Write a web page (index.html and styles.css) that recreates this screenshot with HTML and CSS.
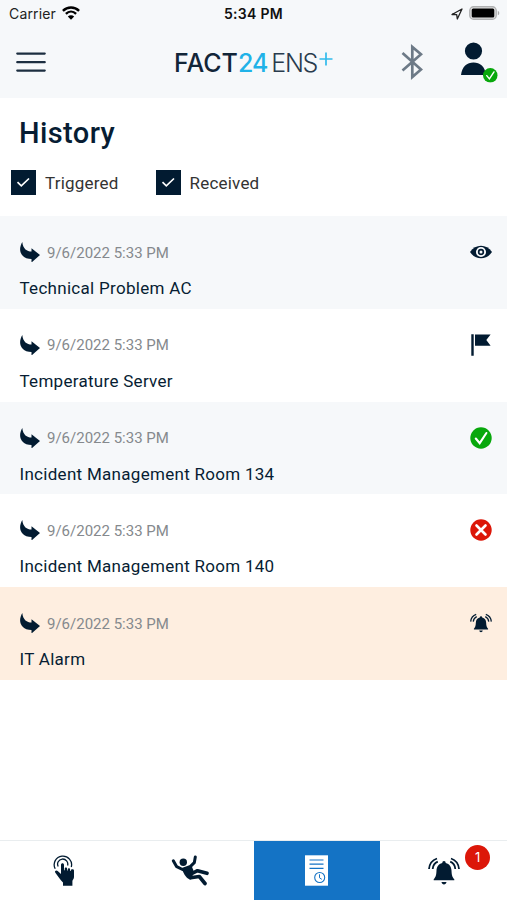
FILE: index.html
```html
<!DOCTYPE html>
<html lang="en">
<head>
<meta charset="utf-8">
<title>History</title>
<link rel="stylesheet" href="styles.css">
</head>
<body>
<svg width="0" height="0" class="defs" aria-hidden="true">
  <symbol id="arrow" viewBox="0 0 20 20"><path d="M2.300 0C-.3 4.500-.8 9.500 2 13C4.500 16 8 17 11.500 17V20.500L20 13L11.500 6.300V9.500C7 9.500 3 7 2.300 0Z"/></symbol>
  <symbol id="bell" viewBox="0 0 32 28">
    <path d="M16 4c1.100 0 1.700.8 1.700 2 3.800.9 5.600 3.800 5.800 7.500.2 4.500.7 6.500 2.800 8.800v1H5.700v-1c2.100-2.300 2.600-4.300 2.800-8.800.2-3.700 2-6.600 5.800-7.500 0-1.200.6-2 1.700-2ZM13.500 25h5c-.3 3.200-4.700 3.200-5 0Z"/>
    <path d="M1 12C1.500 6.500 4.500 3 9 1.500M4.700 12C5 8.700 6.800 6 9.800 4.700M31 12C30.500 6.500 27.500 3 23 1.500M27.300 12C27 8.700 25.200 6 22.200 4.700" fill="none" stroke="currentColor" stroke-width="1.800"/>
  </symbol>
  <symbol id="ok" viewBox="0 0 22 22"><circle cx="11" cy="11" r="10.700" fill="#08a80c"/><path d="M5.800 11.500l3.900 4.700L16.400 6" fill="none" stroke="#fff" stroke-width="2.100" stroke-linecap="round"/></symbol>
</svg>
<div class="app">
  <header class="top">
    <div class="status">
      <div class="status-left"><span class="carrier">Carrier</span>
        <svg class="wifi" viewBox="0 0 18 14"><path d="M.9 4.800C5.500.3 12.500.3 17.100 4.800M3.900 7.800c3-2.900 7.200-2.900 10.200 0" fill="none" stroke="#000" stroke-width="2.400"/><path d="M9 13.700L5.800 10.500c1.800-1.700 4.600-1.700 6.400 0Z"/></svg></div>
      <span class="time">5:34 PM</span>
      <div class="status-right">
        <svg class="loc" viewBox="0 0 12 12"><path d="M1 6.500L11 1L6.300 11L5.700 6.700Z" fill="none" stroke="#222" stroke-width="1.300" stroke-linejoin="round"/></svg>
        <svg class="battery" viewBox="0 0 31 14"><rect x=".8" y=".8" width="26.400" height="12.400" rx="3.800" fill="#e4e4e4" stroke="#b0b1b2" stroke-width="1.400"/><rect x="2.700" y="2.500" width="22.600" height="9" rx="1.500"/><path d="M28.800 4.700c2 .9 2 3.700 0 4.600Z" fill="#aaa"/></svg>
      </div>
    </div>
    <div class="bar">
      <svg class="menu" viewBox="0 0 30 21"><path d="M1.300 1.600h27.400M1.300 10.200h27.400M1.300 18.600h27.400" stroke="#1c2e40" stroke-width="2.300" stroke-linecap="round"/></svg>
      <div class="logo"><span class="fact">FACT</span><span class="num">24</span><span class="ens">ENS</span><svg class="plus" viewBox="0 0 14 14"><path d="M7 .5v13M.5 7h13" stroke="#31bbec" stroke-width="1.700"/></svg></div>
      <div class="actions">
        <svg class="bluetooth" viewBox="0 0 22 36"><path d="M1.500 9L20 25.500L11.300 33V3L20 10.300L1.500 26.500" fill="none" stroke="#6d7a87" stroke-width="2.700"/></svg>
        <svg class="user" viewBox="0 0 38 42"><circle cx="13.500" cy="10" r="8.600"/><path d="M1 34C2 25.500 7 21.500 13.500 21.500S25 25.500 26 34Z"/><use href="#ok" x="22.800" y="26.800" width="15" height="15"/></svg>
      </div>
    </div>
  </header>
  <main>
    <section class="intro">
      <h1>History</h1>
      <div class="filters">
        <label class="filter"><svg viewBox="0 0 25 25"><path d="M0 0h25v25H0z"/><path d="M6.500 12.200l3.800 3.600L18 8.500" fill="none" stroke="#fff" stroke-width="1.700"/></svg><span>Triggered</span></label>
        <label class="filter"><svg viewBox="0 0 25 25"><path d="M0 0h25v25H0z"/><path d="M6.500 12.200l3.800 3.600L18 8.500" fill="none" stroke="#fff" stroke-width="1.700"/></svg><span>Received</span></label>
      </div>
    </section>
    <ul class="list">
      <li class="row shaded"><div class="meta"><svg class="arrow"><use href="#arrow"/></svg><time>9/6/2022 5:33 PM</time>
        <svg class="state" viewBox="0 0 22 22"><path d="M0 11C5.500 2.600 16.500 2.600 22 11C16.500 19.400 5.500 19.400 0 11Z"/><circle cx="11" cy="11" r="4.100" fill="none" stroke="#f6f8fa" stroke-width="1.900"/><circle cx="11" cy="11" r="1.500" fill="#f6f8fa"/></svg></div><div class="name">Technical Problem AC</div></li>
      <li class="row"><div class="meta"><svg class="arrow"><use href="#arrow"/></svg><time>9/6/2022 5:33 PM</time>
        <svg class="state" viewBox="0 0 22 22"><path d="M1.300.3h2.400v21.500H1.300zM5 .5h15.600l-4.300 5.600 4.300 5.600H5z"/></svg></div><div class="name">Temperature Server</div></li>
      <li class="row shaded"><div class="meta"><svg class="arrow"><use href="#arrow"/></svg><time>9/6/2022 5:33 PM</time>
        <svg class="state"><use href="#ok"/></svg></div><div class="name">Incident Management Room 134</div></li>
      <li class="row"><div class="meta"><svg class="arrow"><use href="#arrow"/></svg><time>9/6/2022 5:33 PM</time>
        <svg class="state" viewBox="0 0 22 22"><circle cx="11" cy="11" r="10.700" fill="#dc1709"/><path d="M6.500 6.500l9 9M15.500 6.500l-9 9" stroke="#fff" stroke-width="2.600" stroke-linecap="round"/></svg></div><div class="name">Incident Management Room 140</div></li>
      <li class="row alarm"><div class="meta"><svg class="arrow"><use href="#arrow"/></svg><time>9/6/2022 5:33 PM</time>
        <svg class="state"><use href="#bell"/></svg></div><div class="name">IT Alarm</div></li>
    </ul>
  </main>
  <nav class="tabs">
    <a class="tab"><svg class="touch" viewBox="0 0 22 31"><path d="M2.200 13.800A8.700 8.700 0 1 1 18.300 12M5.200 11.500A5.100 5.100 0 1 1 14.600 10.500" fill="none" stroke="currentColor" stroke-width="1.300"/><path d="M8 9.800c0-2.200 3-2.200 3 0v5.500h.7v-1.600c0-1.700 2.400-1.700 2.400 0v1.900h.7v-1.100c0-1.600 2.300-1.600 2.300 0v1.600h.7v-.7c0-1.500 3.200-1.500 3.200 0v6.500c0 2-1.300 2.500-1.600 4.100v4.700H10v-3.300C7 25 5 21 2.200 17.500c-.8-1.800 1.300-2.800 2.500-1.500L8 19Z"/></svg></a>
    <a class="tab"><svg class="fall" viewBox="0 0 38 32"><circle cx="12.300" cy="7.200" r="3.700"/><path d="M2.300 5.700L5.700 11.700L11.500 14.500L19.500 11.300L23.300 7.700L24.300 2" fill="none" stroke="currentColor" stroke-width="3" stroke-linecap="round" stroke-linejoin="round"/><path d="M10.500 13.500L20.500 10.500L23 17L20 24.500C15.500 24.500 13 19 10.500 13.500Z"/><path d="M21 18.500L26.500 15.700L36 18.300M19.500 22.800L28.300 21.500L34 28.500" fill="none" stroke="currentColor" stroke-width="3.600" stroke-linecap="round" stroke-linejoin="round"/></svg></a>
    <a class="tab active"><svg class="doc" viewBox="0 0 23 31"><path d="M0 .3h23v30.400H0z" fill="#fff"/><path d="M4.500 5h14M4.500 9.200h14M4.500 13.300h14" stroke="#1473c5" stroke-width="1.200"/><circle cx="14.700" cy="22.500" r="5" fill="none" stroke="#1473c5" stroke-width="1.100"/><path d="M14.500 19.300v3.500l2.300 1.500" fill="none" stroke="#1473c5"/></svg></a>
    <a class="tab"><svg class="ring"><use href="#bell"/></svg><span class="badge">1</span></a>
  </nav>
</div>
</body>
</html>
```

FILE: styles.css
```css
* { box-sizing: border-box; }
body { margin: 0; background: #fff; color: #071d33; font-family: Roboto, "Liberation Sans", sans-serif; }
svg { display: block; flex: none; fill: #021b31; color: #021b31; }
.defs { position: absolute; }
.app { height: 900px; display: flex; flex-direction: column; overflow: hidden; }
main { flex: 1; }
.top { height: 98px; background: #f6f8fa; }
.status { height: 27px; display: grid; grid-template-columns: 1fr auto 1fr; align-items: center; padding: 0 7px 0 9px; font-family: Inter, sans-serif; color: #222; }
.status-left, .status-right { display: flex; align-items: center; }
.status-right { justify-content: flex-end; gap: 6px; }
.carrier { font-size: 14px; letter-spacing: 0.150px; }
.wifi { width: 18px; height: 14px; margin: -1px 0 0 6px; fill: #000; }
.time { font-size: 14px; font-weight: 600; letter-spacing: 0.300px; margin-left: -2px; color: #111; }
.loc { width: 12px; height: 12px; }
.battery { width: 31px; height: 14px; margin-top: -1px; fill: #000; }
.bar { height: 70px; display: grid; grid-template-columns: 159px auto 1fr; align-items: center; padding: 0 9px 0 16px; }
.menu { width: 30px; height: 21px; }
.logo { display: flex; align-items: center; height: 30px; margin-left: -1px; padding-top: 2px; font-family: Inter, sans-serif; font-size: 25px; line-height: 30px; }
.fact { font-weight: 500; letter-spacing: 0; color: #122538; }
.num { font-weight: 500; letter-spacing: -1px; color: #20b2e8; }
.ens { font-weight: 300; letter-spacing: -1.300px; color: #293b4d; margin-left: 4px; }
.plus { width: 14px; height: 14px; margin: -8px 0 0 2px; }
.actions { display: flex; align-items: center; justify-content: flex-end; gap: 37px; }
.bluetooth { width: 22px; height: 36px; }
.user { width: 38px; height: 42px; }
.intro { height: 118px; padding: 17px 11px 0; }
h1 { margin: 0 0 0 8px; font-size: 29px; line-height: 36px; font-weight: 500; letter-spacing: 0.400px; }
.filters { display: flex; gap: 37px; margin-top: 18px; }
.filter { display: flex; align-items: center; gap: 9px; font-size: 17px; line-height: 25px; letter-spacing: 0.200px; color: #333; }
.filter span { padding-top: 2px; }
.filter svg { width: 25px; height: 25px; }
.list { list-style: none; margin: 0; padding: 0; }
.row { height: 92.800px; padding: 25px 15px 0 20px; }
.shaded { background: #f6f8fa; }
.alarm { background: #feeee0; }
.meta { display: flex; align-items: center; height: 22px; }
.meta time { margin-left: 7px; padding-top: 1px; font-size: 15px; color: #85898d; }
.arrow { width: 20px; height: 20px; }
.state { width: 22px; height: 22px; margin-left: auto; }
.name { margin: 13px 0 0 -0.500px; font-size: 17px; line-height: 24px; letter-spacing: 0.290px; }
.tabs { height: 60px; display: grid; grid-template-columns: repeat(4, 1fr); border-top: 1px solid #e9edef; }
.tab { position: relative; display: flex; align-items: center; justify-content: center; }
.active { background: #1473c5; }
.touch { width: 22px; height: 31px; margin-left: 1px; }
.fall { width: 38px; height: 32px; }
.doc { width: 23px; height: 31px; }
.ring { width: 32px; height: 28px; }
.badge { position: absolute; left: 85px; top: 4px; width: 25px; height: 25px; border-radius: 50%; background: #dc1709; color: #fff; font: 13px/25px Inter, sans-serif; text-align: center; }
```
